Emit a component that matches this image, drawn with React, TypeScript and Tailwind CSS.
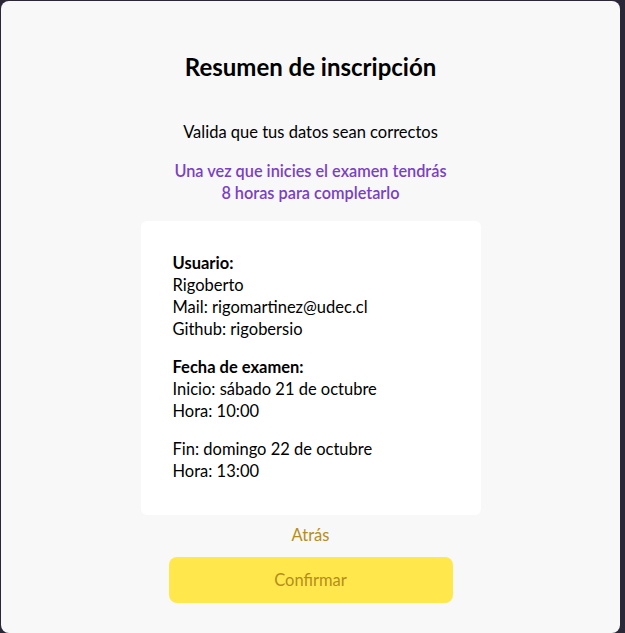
export default function App() {
  return (
    <div className="h-[633px] w-full overflow-hidden bg-[#2b2736] pl-px pt-px pr-[5px]">
      <div
        className="flex h-[632px] flex-col items-center rounded-lg bg-[#f8f8f8] pt-[50px] text-black"
        style={{ fontFamily: "Lato, 'Noto Sans', sans-serif" }}
      >
        <h1 className="text-2xl leading-8 font-bold">Resumen de inscripción</h1>

        <p className="mt-[37px] text-[16.5px] leading-6">Valida que tus datos sean correctos</p>

        <p className="mt-4 text-center text-[16.3px] leading-[22px] font-semibold text-[#7a40c4]">
          Una vez que inicies el examen tendrás
          <br />
          8 horas para completarlo
        </p>

        <div className="mt-[17px] w-[340px] rounded-md bg-white pt-[31px] pb-[33px] pl-8 pr-6 text-[16.5px] leading-[22px]">
          <div>
            <p className="font-bold">Usuario:</p>
            <p>Rigoberto</p>
            <p>Mail: rigomartinez@udec.cl</p>
            <p>Github: rigobersio</p>
          </div>
          <div className="mt-4">
            <p className="font-bold">Fecha de examen:</p>
            <p>Inicio: sábado 21 de octubre</p>
            <p>Hora: 10:00</p>
          </div>
          <div className="mt-4">
            <p>Fin: domingo 22 de octubre</p>
            <p>Hora: 13:00</p>
          </div>
        </div>

        <button className="mt-2 text-[16.5px] leading-6 text-[#b48d1c]">Atrás</button>

        <button className="mt-[10px] h-[46px] w-[284px] rounded-lg bg-[#ffe74c] text-[16.5px] text-[#b48d1c]">
          Confirmar
        </button>
      </div>
    </div>
  );
}
